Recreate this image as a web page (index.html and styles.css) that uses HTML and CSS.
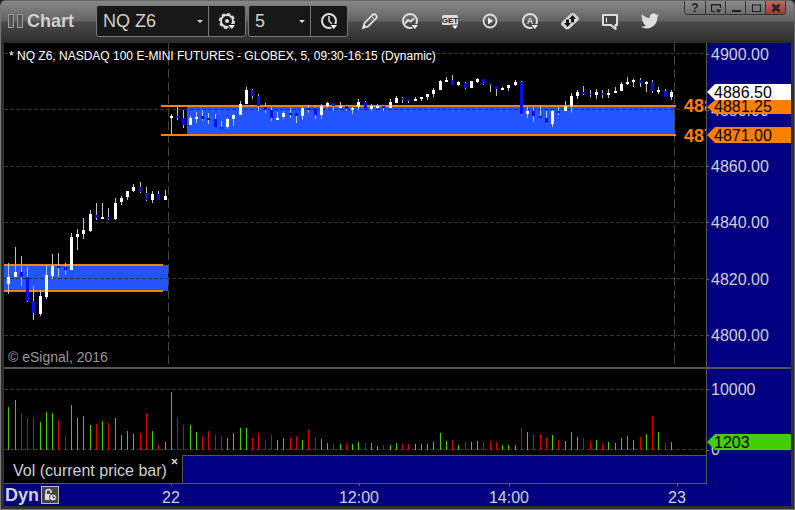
FILE: index.html
```html
<!DOCTYPE html>
<html lang="en">
<head>
    <meta charset="UTF-8">
    <meta name="viewport" content="width=device-width, initial-scale=1.0">
    <title>Chart - NQ Z6</title>
    <link rel="stylesheet" href="styles.css">
</head>
<body>
    <div class="window">
        <header class="toolbar">
            <div class="brand">
                <span class="grip"></span><span class="grip"></span>
                <h1>Chart</h1>
            </div>
            <div class="group symbol-group">
                <label class="picker">
                    <select aria-label="Symbol"><option>NQ Z6</option></select>
                </label>
                <button class="group-button" aria-label="Symbol settings">
                    <svg width="20" height="20" viewBox="0 0 20 20">
                        <circle cx="10" cy="10" r="6" fill="none" stroke="#ddd" stroke-width="2"/>
                        <circle cx="10" cy="10" r="7.3" fill="none" stroke="#ddd" stroke-width="1.6" stroke-dasharray="3.4 2.3"/>
                        <circle cx="10" cy="10" r="2" fill="#ddd"/>
                        <path d="M11.500 14h6.500l-3.200 4z" fill="#fff" stroke="#181818" paint-order="stroke" stroke-width="2"/>
                    </svg>
                </button>
            </div>
            <div class="group interval-group">
                <label class="picker">
                    <select aria-label="Interval"><option>5</option></select>
                </label>
                <button class="group-button" aria-label="Time template">
                    <svg width="20" height="20" viewBox="0 0 20 20">
                        <circle cx="10" cy="10" r="7" fill="none" stroke="#ddd" stroke-width="2"/>
                        <path d="M10 5v5l3 3" fill="none" stroke="#ddd" stroke-width="1.5"/>
                        <path d="M11.500 14h6.500l-3.200 4z" fill="#fff" stroke="#181818" paint-order="stroke" stroke-width="2"/>
                    </svg>
                </button>
            </div>
            <nav class="tools">
                <button aria-label="Draw">
                    <svg width="20" height="20" viewBox="0 0 20 20">
                        <path d="M3 17l1.500-5L13 3.500q1.200-1 2.500.2l.8.8q1.200 1.300.2 2.500L8 15.500z" fill="none" stroke="#ddd" stroke-width="1.8"/>
                        <path d="M11 5l4 4M3 17l1-3.500 2.500 2.500z" fill="#ddd" stroke="#ddd"/>
                    </svg>
                </button>
                <button aria-label="Studies">
                    <svg width="20" height="20" viewBox="0 0 20 20">
                        <circle cx="10" cy="10" r="7" fill="none" stroke="#ddd" stroke-width="2"/>
                        <path d="M5 12.500l3-3.500 2.500 1.500L14 7.500" fill="none" stroke="#ddd" stroke-width="2"/>
                        <path d="M11.500 14h6.500l-3.200 4z" fill="#fff" stroke="#444" paint-order="stroke" stroke-width="2"/>
                    </svg>
                </button>
                <button aria-label="Advanced GET">
                    <svg width="20" height="20" viewBox="0 0 20 20">
                        <rect x="2" y="4" width="16" height="10" rx="1.500" fill="#ddd"/>
                        <text class="get-text" x="10" y="12" text-anchor="middle">GET</text>
                        <path d="M12 14.500h6l-3 3.500z" fill="#fff" stroke="#444" paint-order="stroke" stroke-width="2"/>
                    </svg>
                </button>
                <button aria-label="Playback">
                    <svg width="20" height="20" viewBox="0 0 20 20">
                        <circle cx="10" cy="10" r="6.500" fill="none" stroke="#ddd" stroke-width="1.8"/>
                        <path d="M8 6.500v7l5-3.500z" fill="#eee"/>
                    </svg>
                </button>
                <button aria-label="Alerts">
                    <svg width="20" height="20" viewBox="0 0 20 20">
                        <circle cx="10" cy="10" r="7" fill="none" stroke="#ddd" stroke-width="2"/>
                        <text class="alert-text" x="10" y="13" text-anchor="middle">A</text>
                        <path d="M11.500 14h6.500l-3.200 4z" fill="#fff" stroke="#444" paint-order="stroke" stroke-width="2"/>
                    </svg>
                </button>
                <button aria-label="Trade ticket">
                    <svg width="20" height="20" viewBox="0 0 20 20">
                        <path d="M2 12L11.500 3h2.500l4 4v1.500L8.500 17.500H6L2 13.500z" fill="#222" stroke="#ddd" stroke-width="1.6" stroke-linejoin="round"/>
                        <path d="M2.500 12L11.500 3.500h2.500l3.500 3.500v1.500L8.500 17H6.500L2.500 13z" fill="#ddd"/>
                        <path d="M6 8.500v3.500H4l3.500 4 3.500-4H9V8.500zM12.500 4L9 8h2v3.500h3V8h2z" fill="#111"/>
                    </svg>
                </button>
                <button aria-label="Notes">
                    <svg width="20" height="20" viewBox="0 0 20 20">
                        <path d="M3 4h14v10h-1.500v4L11 14H3z" fill="#444" stroke="#ddd" stroke-width="2" stroke-linejoin="round"/>
                        <path d="M6.500 6.500v5" stroke="#eee"/>
                    </svg>
                </button>
                <button aria-label="Twitter">
                    <svg width="20" height="20" viewBox="0 0 24 24">
                        <path fill="#ddd" d="M23 5c-.8.400-1.700.600-2.600.800.900-.600 1.600-1.500 2-2.500-.9.500-1.800.900-2.900 1.100a4.500 4.500 0 0 0-7.700 4.100C8 8.300 4.700 6.500 2.500 3.800c-1.200 2-.6 4.700 1.400 6-.7 0-1.400-.2-2-.600 0 2.200 1.500 4.100 3.600 4.500-.7.200-1.400.2-2 .1.600 1.800 2.200 3.100 4.200 3.100A9.100 9.100 0 0 1 1 18.800 12.900 12.900 0 0 0 20.800 7.300C21.700 6.700 22.400 5.900 23 5z"/>
                    </svg>
                </button>
            </nav>
            <div class="window-buttons">
                <button class="help" aria-label="Help">?</button>
                <button aria-label="Dock">
                    <svg width="12" height="12" viewBox="0 0 12 12"><path d="M5 9.500H1.500v-7h9V6M1 3h10" fill="none" stroke="#222" stroke-width="1.200"/><path d="M5.500 7.500h6L8.500 11z" fill="#222"/></svg>
                </button>
                <button aria-label="Minimize">
                    <svg width="12" height="12" viewBox="0 0 12 12"><path d="M2 9h9" stroke="#222" stroke-width="2"/></svg>
                </button>
                <button aria-label="Maximize">
                    <svg width="12" height="12" viewBox="0 0 12 12"><path d="M2.500 2v7.500h8V2M2 3h9" fill="none" stroke="#222" stroke-width="1.200"/></svg>
                </button>
                <button class="close" aria-label="Close">
                    <svg width="12" height="12" viewBox="0 0 12 12"><path d="M2.500 2.500l7 7M9.500 2.500l-7 7" stroke="#222" stroke-width="2.500"/></svg>
                </button>
            </div>
        </header>

        <main class="chart">
            <section class="pane price-pane">
                <div class="plot">
                    <svg id="price-plot" viewBox="4 43 702 324" preserveAspectRatio="none"></svg>
                    <p class="chart-title">* NQ Z6, NASDAQ 100 E-MINI FUTURES - GLOBEX, 5, 09:30-16:15 (Dynamic)</p>
                    <p class="copyright">© eSignal, 2016</p>
                    <span class="level level-high">4881.25</span>
                    <span class="level level-low">4871.00</span>
                </div>
                <svg class="axis" id="price-axis" viewBox="707 43 84 324"></svg>
            </section>
            <section class="pane volume-pane">
                <div class="plot">
                    <svg id="volume-plot" viewBox="4 369 702 86" preserveAspectRatio="none"></svg>
                </div>
                <svg class="axis" id="volume-axis" viewBox="707 369 84 86"></svg>
            </section>
            <div class="study-bar">
                <div class="study-tabs">
                    <div class="tab">
                        <span>Vol (current price bar)</span>
                        <button class="tab-close" aria-label="Remove study">
                            <svg width="7" height="7" viewBox="0 0 7 7"><path d="M1 1l5 5M6 1L1 6" stroke="#ddd" stroke-width="1.500"/></svg>
                        </button>
                    </div>
                    <div class="tab-space"></div>
                </div>
            </div>
            <footer class="time-axis">
                <b>Dyn</b>
                <button class="lock" aria-label="Lock time template">
                    <svg width="14" height="14" viewBox="0 0 14 14">
                        <path d="M3 6V4a2.500 2.500 0 0 1 5 0v1" fill="none" stroke="#ddd" stroke-width="1.500"/>
                        <rect x="2" y="6" width="7" height="6" fill="#ddd"/>
                        <circle cx="10" cy="9.500" r="3.500" fill="#ddd" stroke="#444"/>
                        <path d="M10 7.500v2h2" fill="none" stroke="#333"/>
                    </svg>
                </button>
                <svg id="time-labels" viewBox="4 484 787 22" preserveAspectRatio="none"></svg>
            </footer>
        </main>
    </div>
    <script src="script.js"></script>
</body>
</html>
```
FILE: styles.css
```css
* {
    box-sizing: border-box;
}
body {
    margin: 0;
    background-color: #222;
    font-family: "Liberation Sans", Arial, sans-serif;
    color: #d0d0d0;
}
button {
    margin: 0;
    padding: 0;
    border: none;
    background: none;
    font-family: inherit;
    color: inherit;
    cursor: pointer;
}
svg {
    display: block;
}
h1, p {
    margin: 0;
}
.window {
    background-color: #303030;
    border-left: 1px solid #777;
    border-right: 1px solid #666;
    border-bottom: 1px solid #777;
    border-radius: 6px 6px 0 0;
    overflow: hidden;
}

/* Toolbar */
.toolbar {
    display: flex;
    align-items: center;
    height: 43px;
    padding-left: 7px;
    padding-bottom: 2px;
    border-top: 1px solid #666;
    background: linear-gradient(#888 0, #626262 20px, #4a4a4a 21px, #2c2c2c 42px);
}
.brand {
    display: flex;
    align-items: center;
    gap: 3px;
    width: 88px;
}
.brand h1 {
    font-size: 18px;
    line-height: 20px;
    margin-left: 1px;
}
.grip {
    width: 6px;
    height: 14px;
    border: 1px solid #999;
    background-color: #555;
}
.group {
    display: flex;
    height: 32px;
    margin-right: 2px;
    border: 1px solid #777;
    border-radius: 3px;
    background-color: #181818;
    overflow: hidden;
}
.symbol-group {
    width: 150px;
}
.interval-group {
    width: 100px;
}
.picker {
    position: relative;
    flex: 1;
    display: flex;
}
.picker::after {
    content: "";
    position: absolute;
    right: 5px;
    top: 14px;
    border: 3px solid transparent;
    border-top-color: #ddd;
    pointer-events: none;
}
.picker select {
    flex: 1;
    min-width: 0;
    appearance: none;
    border: none;
    padding: 0 6px;
    background: none;
    color: #d0d0d0;
    font-family: inherit;
    font-size: 18px;
}
.group-button {
    display: flex;
    align-items: center;
    justify-content: center;
    width: 37px;
    border-left: 1px solid #777;
}
.tools {
    display: flex;
}
.tools button {
    display: flex;
    align-items: center;
    justify-content: center;
    width: 40px;
    height: 30px;
}
.get-text {
    font-size: 8px;
    font-weight: bold;
    fill: #222;
}
.alert-text {
    font-size: 9px;
    font-weight: bold;
    fill: #ddd;
}
.window-buttons {
    display: flex;
    align-self: flex-start;
    margin-left: auto;
    margin-right: 8px;
    border: 1px solid #333;
    border-top: none;
    border-radius: 0 0 4px 4px;
    overflow: hidden;
}
.window-buttons button {
    display: flex;
    align-items: center;
    justify-content: center;
    width: 20px;
    height: 13px;
    background: linear-gradient(#8c8c8c, #6c6c6c);
    color: #222;
}
.window-buttons button + button {
    border-left: 1px solid #333;
}
.window-buttons .help {
    font-size: 12px;
    font-weight: bold;
}
.window-buttons .close {
    background: linear-gradient(#c06a5c, #a03c30);
}

/* Chart */
.chart {
    margin: 0 3px 3px;
    background-color: #000080;
}
.pane {
    display: flex;
}
.price-pane {
    height: 326px;
    border-bottom: 2px solid #555;
}
.volume-pane {
    height: 86px;
}
.plot {
    position: relative;
    flex: 1;
    min-width: 0;
    overflow: hidden;
    background-color: #000;
    border-right: 1px solid #555;
}
.plot svg {
    width: 100%;
    height: 100%;
}
.axis {
    width: 84px;
    height: 100%;
}
.axis text {
    font-size: 16px;
    fill: #d0d0d0;
}
.axis .tag-text {
    fill: #000;
}
.chart-title, .copyright, .level {
    position: absolute;
    white-space: nowrap;
}
.chart-title {
    left: 5px;
    top: 5px;
    font-size: 12px;
    line-height: 16px;
    color: #fff;
}
.copyright {
    left: 4px;
    bottom: 2px;
    font-size: 14px;
    line-height: 16px;
    color: #999;
}
.level {
    left: 680px;
    font-size: 18px;
    line-height: 20px;
    font-weight: bold;
    color: #ff8000;
}
.level-high {
    top: 53px;
}
.level-low {
    top: 83px;
}
.study-bar {
    padding-right: 84px;
}
.study-tabs {
    display: flex;
    height: 29px;
    border-right: 1px solid #555;
    border-bottom: 1px solid #555;
}
.tab {
    display: flex;
    align-items: flex-end;
    gap: 4px;
    padding-left: 9px;
    padding-right: 4px;
    background-color: #000;
    border-right: 1px solid #555;
    font-size: 16px;
    line-height: 24px;
}
.tab-close {
    align-self: flex-start;
    padding-top: 3px;
}
.tab-space {
    flex: 1;
    border-top: 1px solid #555;
}
.time-axis {
    display: flex;
    align-items: center;
    gap: 2px;
    position: relative;
    height: 22px;
    padding-left: 1px;
    font-size: 18px;
}
.lock {
    padding: 1px;
    border: 1px solid #bbb;
    background-color: #444;
}
#time-labels {
    position: absolute;
    left: 0;
    top: 0;
    width: 100%;
    height: 100%;
    pointer-events: none;
}
#time-labels text {
    font-size: 16px;
    fill: #d0d0d0;
    text-anchor: middle;
}
```
FILE: script.js
```javascript
const WHITE = '#ffffff';
const BLUE = '#0010f0';

// [high, body top, body bottom, low, up] for each 5 minute bar
const bars = [
    [263,277,284,294,1], [247,272,277,277,1], [256,272,277,286,0], [267,277,301,302,0], [286,301,313,320,0],
    [290,296,314,316,1], [265,275,297,299,1], [254,266,276,279,1], [253,266,268,277,0], [263,267,270,275,0],
    [233,237,270,270,1], [229,234,237,250,1], [218,230,234,239,1], [210,214,231,232,1], [203,215,218,220,0],
    [203,217,219,219,1], [208,217,219,220,0], [198,203,219,220,1], [196,198,202,205,1], [191,191,197,200,1],
    [184,187,191,192,1], [182,187,192,193,0], [187,193,200,201,0], [191,194,200,203,1], [191,194,200,200,0],
    [190,196,200,200,1], [114,116,118,135,1], [106,116,118,120,0], [110,118,125,128,0], [116,118,125,125,1],
    [112,117,119,123,1], [110,116,119,121,0], [113,118,120,124,0], [114,119,127,127,0], [121,127,129,129,0],
    [118,119,127,129,1], [114,115,119,126,1], [101,104,115,115,1], [87,90,104,104,1], [89,90,96,99,0],
    [94,96,106,111,0], [103,107,110,113,0], [107,110,118,121,0], [112,118,120,120,1], [111,113,117,119,1],
    [108,113,115,118,0], [113,113,116,123,0], [107,108,116,120,1], [105,108,110,113,0], [106,108,115,119,0],
    [104,106,115,119,1], [102,103,106,108,1], [103,103,106,111,0], [102,106,108,108,1], [105,106,109,111,0],
    [107,108,110,114,1], [99,102,107,110,1], [101,102,109,109,0], [104,106,109,111,1], [104,106,108,108,1],
    [105,106,108,111,0], [99,102,108,108,1], [96,98,103,103,1], [97,98,100,103,0], [99,99,101,103,0],
    [97,99,101,101,1], [97,97,99,101,1], [94,94,97,100,1], [88,90,94,97,1], [80,81,90,90,1],
    [77,80,82,82,1], [75,80,85,85,0], [81,82,85,86,1], [82,83,88,89,0], [81,81,88,88,1],
    [78,79,82,83,1], [79,79,84,85,0], [83,83,85,92,0], [86,86,89,96,0], [87,88,90,90,1],
    [85,85,88,91,1], [80,82,85,86,1], [81,82,114,115,0], [106,111,114,118,1], [106,111,116,122,0],
    [106,116,118,118,0], [111,118,123,124,0], [110,111,124,127,1], [107,111,113,115,0], [101,106,111,111,1],
    [93,96,106,113,1], [90,92,96,99,1], [86,92,94,95,0], [90,94,95,97,0], [89,92,95,99,1],
    [90,93,95,98,0], [89,93,95,98,1], [87,91,93,93,1], [82,84,91,91,1], [77,82,84,85,1],
    [79,80,82,87,1], [78,80,83,87,0], [81,82,84,92,1], [80,82,91,93,0], [87,90,92,94,1],
    [89,91,97,97,0], [90,92,97,100,1]
];

// Volume bar heights, negative for a down bar
const volumes = [
    43, 50, -37, -32, -33, 28, 38, 37, -30, -14, 45, 32, 34, 25, -26, 29, -27, 32, 15, 19, 16, -17, -36, 19, -5,
    8, 58, -33, -25, 25, 18, -14, -19, -15, -14, 12, 17, 22, 22, -12, -17, -10, -15, 10, 12, -12, -14, 10, -20,
    -13, 11, 7, -6, 6, -7, 6, 8, -7, 7, 4, -5, 5, 7, -6, -6, 6, 6, 6, 8, 17, 9, -10, 5, -8, 8, 9, -8, -9, -8,
    5, 5, 5, -22, 18, -16, -16, -12, 15, -10, 9, 18, 13, -12, -9, 10, -7, 8, 7, 12, 14, 10, -13, 16, -34, 18, -7, 8
];

function rect(x, y, w, h, fill) {
    return `<rect x="${x}" y="${y}" width="${w}" height="${h}" fill="${fill}"/>`;
}

function gridLine(y) {
    return `<path d="M4 ${y + 0.5}H706" stroke="#333" stroke-dasharray="4 2"/>`;
}

function barX(i) {
    return Math.ceil(8 + i * 6.25);
}

function label(x, y, text, cls = '') {
    return `<text x="${x}" y="${y}" class="${cls}">${text}</text>`;
}

// Arrow shaped price marker
function tag(top, bottom, fill, baseline, text) {
    const mid = (top + bottom) / 2;
    return `<path d="M707 ${mid}L715 ${top}H791V${bottom}H715z" fill="${fill}"/>` + label(714, baseline, text, 'tag-text');
}

function drawPrice() {
    let out = '';
    out += rect(4, 265, 164, 26, '#2255ff') + rect(187, 106, 488, 29, '#2255ff');
    out += [53, 109, 166, 222, 278, 335].map(gridLine).join('');
    out += '<path d="M168.5 43V367M674.5 43V367" stroke="#444" stroke-dasharray="9 4"/>';
    out += rect(4, 264, 159, 2, '#ff8000') + rect(4, 290, 159, 2, '#ff8000');
    out += rect(161, 105, 515, 2, '#ff8000') + rect(161, 134, 515, 2, '#ff8000');
    bars.forEach(([high, top, bottom, low, up], i) => {
        const x = barX(i);
        out += rect(x, high, 1, low - high, '#c0c0c0');
        out += rect(x - 1, top, 3, bottom - top, up ? WHITE : BLUE);
    });
    document.getElementById('price-plot').innerHTML = out;
}

function drawPriceAxis() {
    const prices = [['4900.00', 60], ['4880.00', 116], ['4860.00', 172], ['4840.00', 228], ['4820.00', 285], ['4800.00', 341]];
    let out = prices.map(([text, y]) => rect(707, y - 6, 2, 1, '#666') + label(711, y, text)).join('');
    out += tag(100, 114, '#ff8000', 112, '4881.25');
    out += tag(84, 100, '#ffffff', 98, '4886.50');
    out += tag(127, 143, '#ff8000', 141, '4871.00');
    document.getElementById('price-axis').innerHTML = out;
}

function drawVolume() {
    let out = gridLine(389) + gridLine(449);
    volumes.forEach((v, i) => {
        out += rect(barX(i), 450 - Math.abs(v), 1, Math.abs(v), v > 0 ? '#44d000' : '#d80000');
    });
    document.getElementById('volume-plot').innerHTML = out;

    out = rect(707, 389, 2, 1, '#666') + label(711, 395, '10000');
    out += rect(707, 450, 2, 1, '#666') + label(711, 455, '0');
    out += tag(434, 450, '#44d000', 448, '1203');
    document.getElementById('volume-axis').innerHTML = out;
}

function drawTimeAxis() {
    const times = [[171, '22'], [359, '12:00'], [509, '14:00'], [677, '23']];
    document.getElementById('time-labels').innerHTML =
        times.map(([x, text]) => rect(x, 484, 1, 2, '#666') + label(x, 503, text)).join('');
}

drawPrice();
drawPriceAxis();
drawVolume();
drawTimeAxis();
```
